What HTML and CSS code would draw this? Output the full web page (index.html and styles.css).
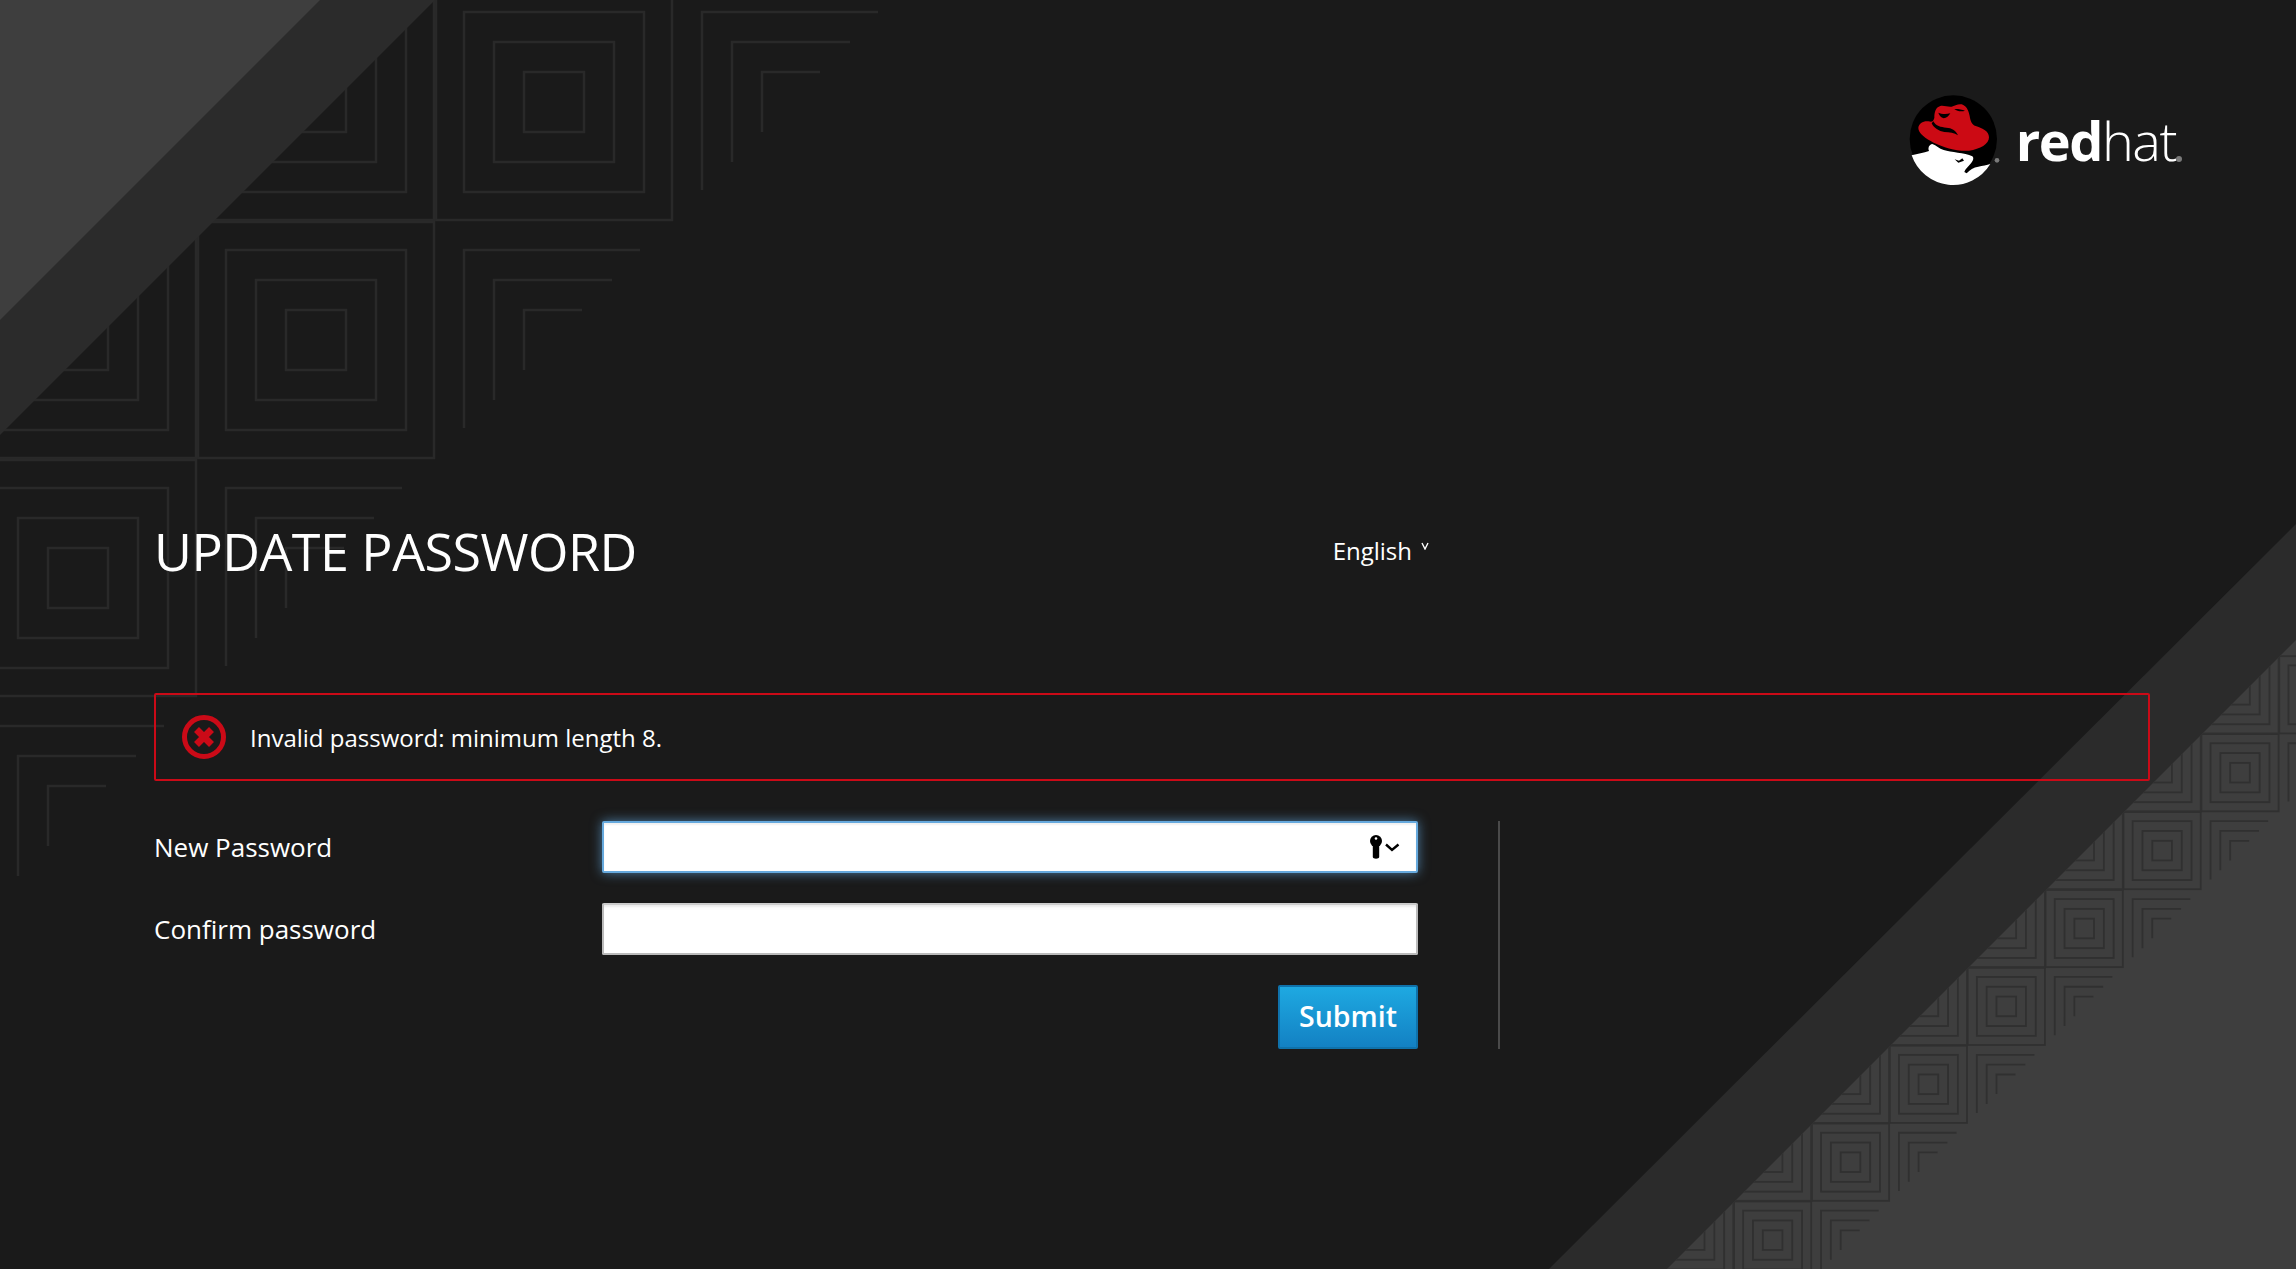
FILE: index.html
```html
<!DOCTYPE html>
<html lang="en">
<head>
<meta charset="utf-8">
<title>Update Password</title>
<link rel="stylesheet" href="styles.css">
</head>
<body>
<svg class="backdrop" viewBox="0 0 2296 1269" aria-hidden="true">
  <defs>
    <g id="ring">
      <rect x="-30" y="-30" width="60" height="60"/>
      <rect x="-60" y="-60" width="120" height="120"/>
      <rect x="-90" y="-90" width="180" height="180"/>
      <rect x="-118" y="-118" width="236" height="236"/>
    </g>
    <g id="corner">
      <path d="M-90 88V-90H86"/>
      <path d="M-60 60V-60H58"/>
      <path d="M-30 30V-30H28"/>
    </g>
    <clipPath id="lightClip"><polygon points="2296,640 2296,1269 1667,1269"/></clipPath>
  </defs>
  <g class="pattern-top">
    <use href="#ring" x="554" y="102"/>
    <use href="#ring" x="316" y="102"/>
    <use href="#ring" x="316" y="340"/>
    <use href="#ring" x="78" y="340"/>
    <use href="#ring" x="78" y="578"/>
    <use href="#corner" x="792" y="102"/>
    <use href="#corner" x="554" y="340"/>
    <use href="#corner" x="316" y="578"/>
    <use href="#corner" x="78" y="816"/>
  </g>
  <polygon class="band-mid" points="0,0 435,0 0,435"/>
  <polygon class="band-light" points="0,0 320,0 0,320"/>
  <polygon class="band-mid" points="2296,524 2296,1269 1549,1269"/>
  <polygon class="band-light" points="2296,640 2296,1269 1667,1269"/>
  <g class="pattern-bottom" clip-path="url(#lightClip)">
    <use href="#ring" transform="translate(2317.9 694.8) scale(.3273)"/>
    <use href="#ring" transform="translate(2240 772.7) scale(.3273)"/>
    <use href="#ring" transform="translate(2162.1 850.6) scale(.3273)"/>
    <use href="#ring" transform="translate(2084.2 928.5) scale(.3273)"/>
    <use href="#ring" transform="translate(2006.3 1006.4) scale(.3273)"/>
    <use href="#ring" transform="translate(1928.4 1084.3) scale(.3273)"/>
    <use href="#ring" transform="translate(1850.5 1162.2) scale(.3273)"/>
    <use href="#ring" transform="translate(1772.6 1240.1) scale(.3273)"/>
    <use href="#ring" transform="translate(2240 694.8) scale(.3273)"/>
    <use href="#ring" transform="translate(2162.1 772.7) scale(.3273)"/>
    <use href="#ring" transform="translate(2084.2 850.6) scale(.3273)"/>
    <use href="#ring" transform="translate(2006.3 928.5) scale(.3273)"/>
    <use href="#ring" transform="translate(1928.4 1006.4) scale(.3273)"/>
    <use href="#ring" transform="translate(1850.5 1084.3) scale(.3273)"/>
    <use href="#ring" transform="translate(1772.6 1162.2) scale(.3273)"/>
    <use href="#ring" transform="translate(1694.7 1240.1) scale(.3273)"/>
    <use href="#corner" transform="translate(2317.9 772.7) scale(.3273)"/>
    <use href="#corner" transform="translate(2240 850.6) scale(.3273)"/>
    <use href="#corner" transform="translate(2162.1 928.5) scale(.3273)"/>
    <use href="#corner" transform="translate(2084.2 1006.4) scale(.3273)"/>
    <use href="#corner" transform="translate(2006.3 1084.3) scale(.3273)"/>
    <use href="#corner" transform="translate(1928.4 1162.2) scale(.3273)"/>
    <use href="#corner" transform="translate(1850.5 1240.1) scale(.3273)"/>
  </g>
</svg>

<div class="page">
  <header class="brand">
    <svg class="hat-logo" viewBox="0 0 315 300" aria-hidden="true">
      <circle class="logo-black" cx="157" cy="147" r="131"/>
      <path class="logo-white" d="M32 196C50 192 68 188 84 183C80 174 84 164 94 162C106 166 114 176 128 180C150 187 190 188 214 199C220 204 216 214 208 222C200 232 192 238 190 246L197 250C206 240 218 232 232 230C244 227 258 226 268 222A131 131 0 0 1 32 196Z"/>
      <path class="logo-black" d="M161 208L174 212L184 205L189 212L172 218Z"/>
      <path class="logo-red" d="M100 84C100 66 104 52 118 48C130 46 142 52 152 50C160 47 172 41 182 43C196 47 203 62 206 78C208 92 212 104 224 108C242 114 264 122 264 142C264 162 238 178 204 182C170 185 128 172 98 158C74 146 52 130 52 114C53 100 68 92 82 94C90 95 96 98 100 84Z"/>
      <path class="logo-black" d="M97 94C104 108 120 112 136 113C152 114 164 120 171 136C160 128 146 126 130 126C114 124 98 114 92 100Z"/>
      <path class="logo-black" d="M112 68C120 72 134 74 148 70C144 78 136 84 128 85C120 82 114 76 112 68Z"/>
      <path class="logo-black" d="M160 57C168 56 182 58 192 62C182 66 168 64 160 57Z"/>
      <circle class="logo-mark" cx="288" cy="211" r="7"/>
    </svg>
    <span class="wordmark"><b>red</b><span class="wordmark-light">hat</span><i class="wordmark-dot"></i></span>
  </header>

  <main>
    <div class="title-row">
      <h1>UPDATE PASSWORD</h1>
      <div class="locale">English
        <svg class="locale-caret" viewBox="0 0 8 8" aria-hidden="true"><path d="M1 1L4 7L7 1"/></svg>
      </div>
    </div>

    <div class="alert">
      <svg class="alert-icon" viewBox="0 0 44 44" aria-hidden="true">
        <circle cx="22" cy="22" r="19.5"/>
        <path d="M14.5 14.5L29.5 29.5M29.5 14.5L14.5 29.5"/>
      </svg>
      <span>Invalid password: minimum length 8.</span>
    </div>

    <form class="form">
      <div class="field">
        <label for="new">New Password</label>
        <div class="input-wrap">
          <input id="new" class="input input-focus" type="password">
          <svg class="key-icon" viewBox="0 0 50 40" aria-hidden="true">
            <circle cx="21" cy="15" r="6"/>
            <path d="M17.800 17H24.200V31C24.200 33.300 17.800 33.300 17.800 31Z"/>
            <circle class="key-hole" cx="21" cy="12.500" r="1.300"/>
            <path class="key-chevron" d="M31 18.500L37 24L43.500 18.500"/>
          </svg>
        </div>
      </div>
      <div class="field">
        <label for="confirm">Confirm password</label>
        <input id="confirm" class="input" type="password">
      </div>
      <div class="actions"><button class="submit" type="button">Submit</button></div>
    </form>
  </main>
</div>
</body>
</html>
```
FILE: styles.css
```css
* { box-sizing: border-box; }
html, body { margin: 0; height: 100%; }
body {
  position: relative;
  height: 1269px;
  overflow: hidden;
  background: #1a1a1a;
  color: #fff;
  font-family: "Open Sans", "Noto Sans", sans-serif;
}
.backdrop { position: absolute; left: 0; top: 0; width: 2296px; height: 1269px; }
.pattern-top { fill: none; stroke: #292929; stroke-width: 2.500; }
.pattern-bottom { fill: none; stroke: #303030; stroke-width: 5.500; }
.band-mid { fill: #2b2b2b; }
.band-light { fill: #3e3e3e; }

.page { position: relative; padding: 95px 146px 0 154px; }

.brand { display: flex; justify-content: flex-end; align-items: flex-start; height: 426px; margin-right: -32px; }
.hat-logo { width: 105px; height: 100px; margin-top: -5px; }
.logo-black { fill: #000; }
.logo-white { fill: #fff; }
.logo-red { fill: #cc0a14; }
.logo-mark { fill: #7a7a7a; }
.wordmark { display: flex; margin: 8px 0 0 10px; font-size: 54px; line-height: 74px; letter-spacing: -1.500px; }
.wordmark b { font-weight: 700; }
.wordmark-light { font-weight: 300; }
.wordmark-dot { width: 6px; height: 6px; margin: 53px 0 0 0; border-radius: 50%; background: #7a7a7a; }

.title-row { display: flex; justify-content: space-between; align-items: center; width: 1275px; height: 60px; }
h1 { margin: 0; font-size: 52px; font-weight: 400; line-height: 60px; letter-spacing: -.500px; }
.locale { display: flex; align-items: center; gap: 9px; font-size: 24px; line-height: 36px; }
.locale-caret { width: 8px; height: 8px; margin-top: -10px; fill: none; stroke: #fff; stroke-width: 1.400; }

.alert {
  display: flex;
  align-items: center;
  gap: 24px;
  height: 88px;
  margin-top: 112px;
  padding-left: 26px;
  border: 2px solid #cb0a17;
  border-radius: 2px;
  font-size: 24px;
}
.alert-icon { width: 44px; height: 44px; flex: none; fill: none; stroke: #cb0a17; }
.alert-icon circle { stroke-width: 5; }
.alert-icon path { stroke-width: 7; }

.form {
  display: flex;
  flex-direction: column;
  gap: 30px;
  width: 1346px;
  margin-top: 40px;
  padding-right: 80px;
  border-right: 2px solid #4a4a4a;
}
.field { display: grid; grid-template-columns: 448px 816px; align-items: center; }
.field label { font-size: 26px; }
.input-wrap { position: relative; height: 52px; }
.input {
  display: block;
  width: 816px;
  height: 52px;
  padding: 0 14px;
  background: #fff;
  border: 2px solid #bbb;
  border-top-color: #ccc;
  border-radius: 2px;
  box-shadow: inset 0 3px 2px -1px rgba(0, 0, 0, .08);
  outline: none;
}
.input-focus {
  border-color: #66a9dd;
  box-shadow: inset 0 2px 2px rgba(0, 0, 0, .06), 0 0 12px rgba(102, 175, 233, .65);
}
.key-icon { position: absolute; right: 13px; top: 5px; width: 50px; height: 40px; fill: #000; }
.key-hole { fill: #fff; }
.key-chevron { fill: none; stroke: #000; stroke-width: 2.400; }
.actions { display: flex; justify-content: flex-end; }
.submit {
  width: 140px;
  height: 64px;
  padding: 0 0 3px;
  background: linear-gradient(#1ea9e1, #1381c3);
  border: 2px solid #0f72ab;
  border-radius: 2px;
  color: #fff;
  font: 600 28.500px "Open Sans", "Noto Sans", sans-serif;
}
```
